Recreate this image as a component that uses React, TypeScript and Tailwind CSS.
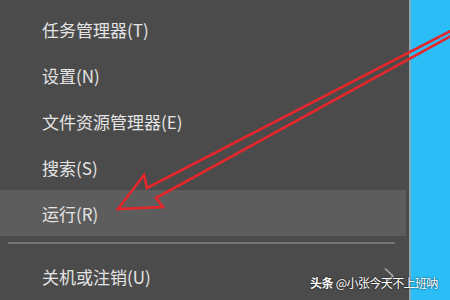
import React from "react";

const items = [
  { label: "任务管理器(T)" },
  { label: "设置(N)" },
  { label: "文件资源管理器(E)" },
  { label: "搜索(S)" },
  { label: "运行(R)", active: true },
];

function MenuRow({ label, active, chevron }: { label: string; active?: boolean; chevron?: boolean }) {
  return (
    <div
      className={
        "flex h-[46px] items-center pl-[42px] pr-[14px] " + (active ? "bg-[#5d5d5d] mr-[3px]" : "")
      }
    >
      <span className="text-[17px] leading-none text-[#e4e4e4]">{label}</span>
      {chevron && (
        <svg className="ml-auto h-[18px] w-[12px]" viewBox="0 0 12 18" fill="none">
          <path d="M2 1.5 L10 9 L2 16.5" stroke="#a9a9a9" strokeWidth="1.6" />
        </svg>
      )}
    </div>
  );
}

export default function App() {
  return (
    <div
      className="relative flex h-[300px] w-[450px] overflow-hidden"
      style={{ fontFamily: '"Noto Sans CJK SC", "Noto Sans", sans-serif' }}
    >
      <div className="flex w-[411px] flex-col border-r-2 border-[#86a9b8] bg-[#4b4b4b] pt-[6px]">
        {items.map((it) => (
          <MenuRow key={it.label} label={it.label} active={it.active} />
        ))}
        <div className="mx-[8px] mt-[6px] mb-[9px] h-[2px] w-[387px] bg-[#747474]" />
        <MenuRow label="关机或注销(U)" chevron />
      </div>
      <div className="flex-1 bg-[#2bbef6]" />

      {/* red annotation arrow */}
      <svg className="pointer-events-none absolute left-0 top-0" width="450" height="300" viewBox="0 0 450 300">
        <path
          d="M118 209 L144 175 L147 188 L460 26 L460 31 L156 198 L163 207 Z"
          fill="none"
          stroke="#e3272c"
          strokeWidth="2.6"
          strokeLinejoin="miter"
        />
      </svg>

      {/* watermark */}
      <div className="absolute left-[310px] top-[277px] flex items-center gap-[3px] whitespace-nowrap text-[12px] leading-none tracking-[-0.6px] text-white [text-shadow:0_0_2px_rgba(0,0,0,0.9)]">
        <span className="font-bold">头条</span>
        <span>@小张今天不上班呐</span>
      </div>
    </div>
  );
}
